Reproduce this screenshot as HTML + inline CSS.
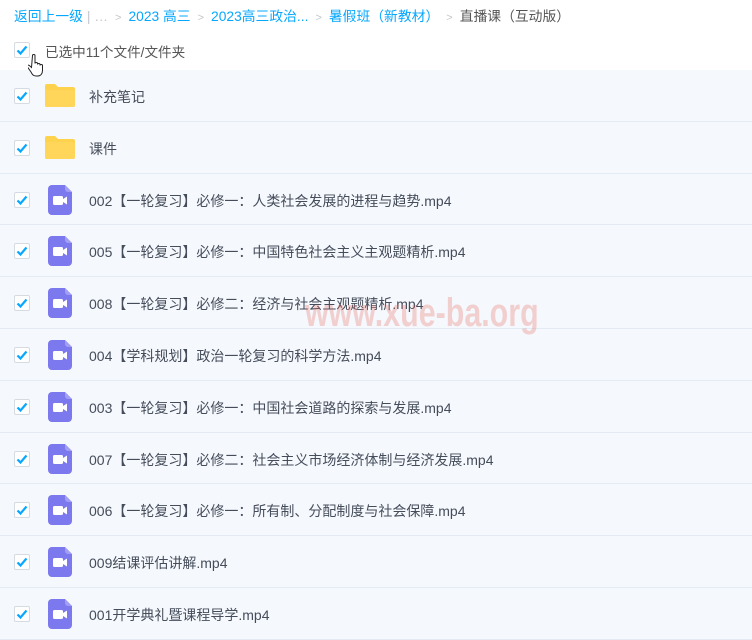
<!DOCTYPE html>
<html><head><meta charset="utf-8"><style>
*{margin:0;padding:0;box-sizing:border-box}
body{width:752px;height:633px;overflow:hidden;background:#fff;font-family:"Liberation Sans","Noto Sans CJK SC",sans-serif;position:relative;color:#454d5a}
.bc{position:absolute;top:5px;left:14px;font-size:13.8px;white-space:nowrap;color:#06a7ff}
.bc .s{color:#c4c8cc;margin:0 7px;font-size:11px}
.bc .g{color:#c4c8cc}
.bc .cur{color:#555}
.cb{position:absolute;left:14px;width:16px;height:16px;border:1px solid #d6dbe2;border-radius:2px;background:#fff}
.cb svg{position:absolute;left:1px;top:1px}
.sel{position:absolute;top:41px;left:45px;font-size:13.6px;color:#555}
.row{position:absolute;left:0;width:752px;background:#f5f8fd;border-bottom:1px solid #e2eaf4}
.row .cb{top:18px}
.row .t{position:absolute;left:89px;top:17px;font-size:14px;color:#454d5a;white-space:nowrap}
.fold{position:absolute;left:45px;top:13px;width:30px;height:24px}
.vid{position:absolute;left:48px;top:11px;width:24px;height:30px}
.wm{position:absolute;left:305px;top:291px;font-size:40px;font-weight:bold;color:rgba(235,100,90,0.28);transform:scaleX(0.76);transform-origin:left;font-family:"Liberation Sans",sans-serif}
</style></head><body>
<div class="bc">返回上一级<span class="g"> | …</span><span class="s">&gt;</span>2023 高三<span class="s">&gt;</span>2023高三政治...<span class="s">&gt;</span>暑假班（新教材）<span class="s">&gt;</span><span class="cur">直播课（互动版）</span></div>
<div class="cb" style="top:42px"><svg width="12" height="12" viewBox="0 0 12 12"><path d="M1.5 6.5 L4.5 9.5 L10.5 2.5" stroke="#06a7ff" stroke-width="2.2" fill="none"/></svg></div>
<div class="sel">已选中11个文件/文件夹</div>
<div id="rows"></div>
<svg style="position:absolute;left:28px;top:54px" width="18" height="24" viewBox="0 0 18 24"><path d="M4.5 1.5 c0-1.3 2.5-1.3 2.5 0 v8 c0-1.3 2.5-1.3 2.5 0 v1 c0-1.3 2.5-1.3 2.5 0 v1 c0-1.3 2.5-1.3 2.5 0 v5 c0 3-1.8 5.5-4.5 5.5 h-2 c-3 0-4-2-5-4 l-3.5-5 c-0.8-1.2 0.5-2.5 1.8-1.5 l2.2 2z" fill="#fff" stroke="#222" stroke-width="1"/></svg>
<div class="wm">www.xue-ba.org</div>
<script>
var items=[["f","补充笔记"],["f","课件"],["v","002【一轮复习】必修一：人类社会发展的进程与趋势.mp4"],["v","005【一轮复习】必修一：中国特色社会主义主观题精析.mp4"],["v","008【一轮复习】必修二：经济与社会主观题精析.mp4"],["v","004【学科规划】政治一轮复习的科学方法.mp4"],["v","003【一轮复习】必修一：中国社会道路的探索与发展.mp4"],["v","007【一轮复习】必修二：社会主义市场经济体制与经济发展.mp4"],["v","006【一轮复习】必修一：所有制、分配制度与社会保障.mp4"],["v","009结课评估讲解.mp4"],["v","001开学典礼暨课程导学.mp4"]];
var h="";
items.forEach(function(it,i){
var top=Math.round(70+i*51.8), nt=Math.round(70+(i+1)*51.8);
var ic=it[0]=="f"?'<svg class="fold" viewBox="0 0 30 24"><path d="M0 3 a2 2 0 0 1 2-2 h8 l3 3 h15 a2 2 0 0 1 2 2 v16 a2 2 0 0 1-2 2 h-26 a2 2 0 0 1-2-2z" fill="#ffd24d"/><path d="M0 7 h30 v15 a2 2 0 0 1-2 2 h-26 a2 2 0 0 1-2-2z" fill="#ffd659"/></svg>'
:'<svg class="vid" viewBox="0 0 24 30"><path d="M4 0 h13 l7 7 v19 a4 4 0 0 1-4 4 h-16 a4 4 0 0 1-4-4 v-22 a4 4 0 0 1 4-4z" fill="#7c78ee"/><path d="M17 0 l7 7 h-4 a3 3 0 0 1-3-3z" fill="#a29ef5"/><rect x="5" y="11" width="10" height="9" rx="1.5" fill="#fff"/><path d="M15 14 l4-2.5 v8 l-4-2.5z" fill="#fff"/></svg>';
h+='<div class="row" style="top:'+top+'px;height:'+(nt-top)+'px"><div class="cb"><svg width="12" height="12" viewBox="0 0 12 12"><path d="M1.5 6.5 L4.5 9.5 L10.5 2.5" stroke="#06a7ff" stroke-width="2.2" fill="none"/></svg></div>'+ic+'<div class="t">'+it[1]+'</div></div>';
});
document.getElementById("rows").innerHTML=h;
</script>
</body></html>
